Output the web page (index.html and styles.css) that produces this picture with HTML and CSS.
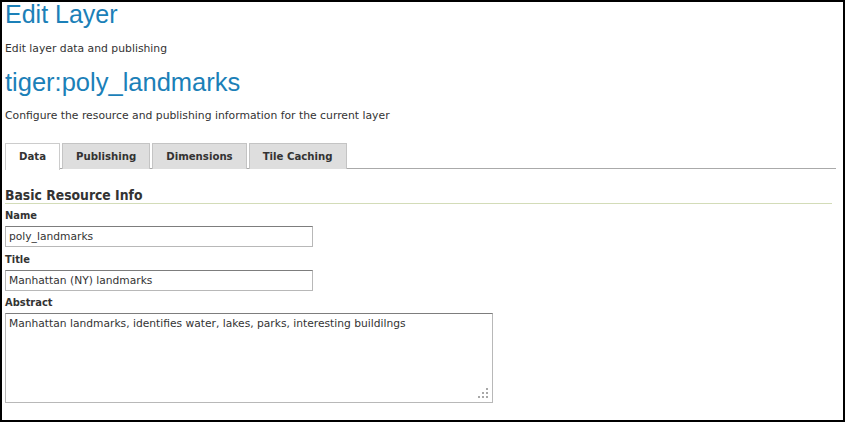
FILE: index.html
```html
<!DOCTYPE html>
<html>
<head>
<meta charset="utf-8">
<link rel="stylesheet" href="styles.css">
</head>
<body>
<div class="page">
  <h1 class="title">Edit Layer</h1>
  <p class="desc desc-first">Edit layer data and publishing</p>
  <h2 class="layer-name">tiger:poly_landmarks</h2>
  <p class="desc desc-second">Configure the resource and publishing information for the current layer</p>

  <ul class="tabs">
    <li class="tab active">Data</li>
    <li class="tab">Publishing</li>
    <li class="tab">Dimensions</li>
    <li class="tab">Tile Caching</li>
  </ul>

  <h3 class="section">Basic Resource Info</h3>
  <div class="field">
    <label class="label">Name</label>
    <div class="input input-short">poly_landmarks</div>
  </div>
  <div class="field">
    <label class="label">Title</label>
    <div class="input input-short">Manhattan (NY) landmarks</div>
  </div>
  <div class="field field-abstract">
    <label class="label">Abstract</label>
    <div class="textarea-wrap">
      <div class="textarea">Manhattan landmarks, identifies water, lakes, parks, interesting buildilngs</div>
      <div class="grip">
        <span class="dot d1"></span>
        <span class="dot d2"></span><span class="dot d3"></span>
        <span class="dot d4"></span><span class="dot d5"></span><span class="dot d6"></span>
      </div>
    </div>
  </div>
</div>
</body>
</html>
```

FILE: styles.css
```css
* { box-sizing: border-box; }
html, body { margin: 0; padding: 0; background: #fff; }
.page {
  width: 845px;
  height: 422px;
  border: 2px solid #000;
  padding: 0 3px;
  overflow: hidden;
  font-family: "DejaVu Sans", sans-serif;
  font-size: 10.7px;
  color: #333;
}
.title {
  margin: 0;
  font-family: "Liberation Sans", Arial, sans-serif;
  font-weight: normal;
  font-size: 25px;
  line-height: 25px;
  color: #1b80b8;
}
.desc {
  margin: 0;
  font-size: 10.8px;
  line-height: 14px;
  color: #333;
}
.desc-first { margin-top: 15px; }
.layer-name {
  margin: 13px 0 0;
  font-family: "Liberation Sans", Arial, sans-serif;
  font-weight: normal;
  font-size: 25.5px;
  line-height: 26px;
  color: #1b80b8;
}
.desc-second { margin-top: 14px; }
.tabs {
  list-style: none;
  margin: 20px 4px 0 0;
  padding: 0;
  display: flex;
  gap: 2px;
  border-bottom: 1px solid #aaa;
  height: 26px;
}
.tab {
  height: 26px;
  padding: 2px 13px 0;
  border: 1px solid #c4c4c4;
  border-bottom: none;
  background: #dedede;
  font-family: "DejaVu Sans Condensed", "DejaVu Sans", sans-serif;
  font-weight: bold;
  font-size: 11.3px;
  line-height: 22px;
  color: #333;
}
.tab.active {
  background: #fff;
  border-color: #ccc;
  margin-bottom: -1px;
  height: 27px;
}
.section {
  margin: 18px 8px 0 0;
  font-family: "DejaVu Sans Condensed", "DejaVu Sans", sans-serif;
  font-size: 13.8px;
  line-height: 16px;
  font-weight: bold;
  color: #333;
  border-bottom: 1px solid #d3dcb8;
}
.field { display: flex; flex-direction: column; align-items: flex-start; }
.label {
  margin-top: 5px;
  font-family: "DejaVu Sans Condensed", "DejaVu Sans", sans-serif;
  font-weight: bold;
  font-size: 11px;
  line-height: 14px;
  color: #333;
}
.field + .field .label { margin-top: 6px; }
.field + .field-abstract .label { margin-top: 5px; }
.input {
  margin-top: 3px;
  width: 308px;
  height: 21px;
  border: 1px solid #b8b8b8;
  border-top-color: #7d7d7d;
  padding: 0 3px;
  font-size: 10.7px;
  line-height: 19px;
  color: #333;
}
.textarea-wrap {
  margin-top: 3px;
  position: relative;
  width: 488px;
  height: 90px;
}
.textarea {
  width: 100%;
  height: 100%;
  border: 1px solid #b8b8b8;
  border-top-color: #7d7d7d;
  padding: 3px 3px;
  font-size: 10.7px;
  line-height: 14px;
  color: #333;
}
.grip {
  position: absolute;
  right: 5px;
  bottom: 5px;
  width: 11px;
  height: 11px;
}
.dot {
  position: absolute;
  width: 2px;
  height: 2px;
  background: #a8a8a8;
}
.d1 { right: 0; top: 1px; }
.d2 { right: 4px; top: 5px; }
.d3 { right: 0; top: 5px; }
.d4 { right: 8px; top: 9px; }
.d5 { right: 4px; top: 9px; }
.d6 { right: 0; top: 9px; }
```
